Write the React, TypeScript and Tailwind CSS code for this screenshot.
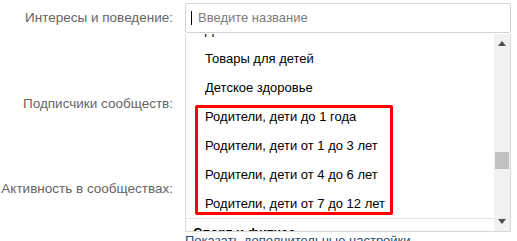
import React from 'react';

const items = [
  'Детское питание',
  'Товары для детей',
  'Детское здоровье',
  'Родители, дети до 1 года',
  'Родители, дети от 1 до 3 лет',
  'Родители, дети от 4 до 6 лет',
  'Родители, дети от 7 до 12 лет',
];

const App = () => {
  return (
    <div className="relative w-[517px] h-[241px] overflow-hidden bg-white font-['Liberation_Sans',Arial,sans-serif] text-[13px]">
      {/* Form rows */}
      <div className="flex flex-col pt-[3px]">
        <div className="flex h-[30px] items-center">
          <div className="w-[174px] pr-[1px] text-right whitespace-nowrap text-[13.5px] text-[#656565]">Интересы и поведение:</div>
          <div className="ml-[11px] flex-1 mr-[6px] h-full rounded-[2px] border border-[#d3d3d3] flex items-center pl-[5px]">
            <span className="w-px h-[14px] bg-black mr-[6px]" />
            <span className="text-[13px] text-[#7b7b7b]">Введите название</span>
          </div>
        </div>
        <div className="mt-[56px] flex h-[30px] items-center">
          <div className="w-[174px] pr-[1px] text-right whitespace-nowrap text-[13.5px] text-[#656565]">Подписчики сообществ:</div>
        </div>
        <div className="mt-[55px] flex h-[30px] items-center">
          <div className="w-[174px] pr-[1px] text-right whitespace-nowrap text-[13.5px] text-[#656565]">Активность в сообществах:</div>
        </div>
        <div className="mt-[27px] pl-[185px] text-[13px] whitespace-nowrap text-[#2a4a70]">Показать дополнительные настройки</div>
      </div>

      {/* Dropdown */}
      <div className="absolute left-[185px] top-[34px] w-[326px] h-[198px] bg-white border border-t-0 border-[#d8d8d8] flex">
        <div className="relative flex-1 overflow-hidden">
          <div className="mt-[-19px]">
            {items.map((item) => (
              <div key={item} className="h-[29px] flex items-center pl-[19px] text-black">
                {item}
              </div>
            ))}
            <div className="h-[29px] flex items-center pl-[7px] border-t border-[#e4e4e4] font-bold text-black">
              Спорт и фитнес
            </div>
          </div>
          {/* highlight */}
          <div className="absolute left-[9px] top-[71px] w-[198px] h-[110px] border-[3px] border-[#ff0000] rounded-[2px]" />
        </div>
        {/* scrollbar */}
        <div className="w-[16px] bg-[#f1f1f1] flex flex-col items-center justify-between py-[7px]">
          <svg width="8" height="5" viewBox="0 0 8 5"><path d="M4 0L8 5H0z" fill="#505050" /></svg>
          <div className="flex-1 w-full relative">
            <div className="absolute left-[1px] right-[1px] top-[106px] h-[17px] bg-[#c1c1c1]" />
          </div>
          <svg width="8" height="5" viewBox="0 0 8 5"><path d="M0 0H8L4 5z" fill="#505050" /></svg>
        </div>
      </div>
    </div>
  );
};

export default App;
